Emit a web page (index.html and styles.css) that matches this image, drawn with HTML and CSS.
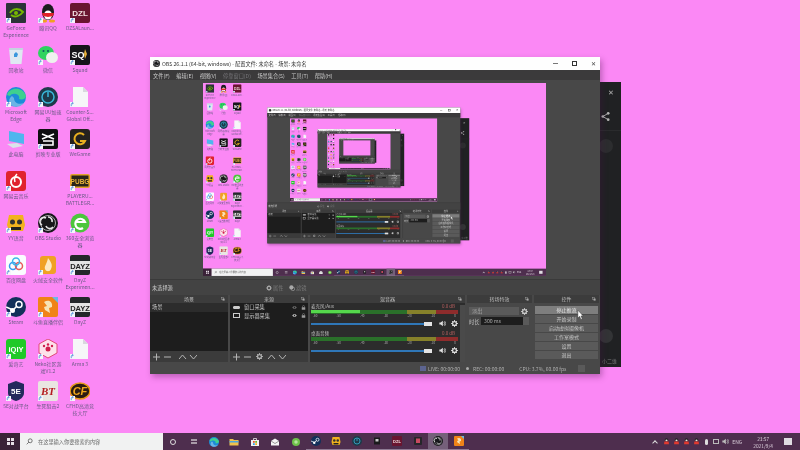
FILE: index.html
```html
<!DOCTYPE html>
<html lang="zh-CN">
<head>
<meta charset="utf-8">
<title>OBS</title>
<link rel="stylesheet" href="styles.css">
</head>
<body>
<svg class="defs" xmlns="http://www.w3.org/2000/svg">
  <symbol id="i-nvidia" viewBox="0 0 20 20"><rect width="20" height="20" rx="1" fill="#2b3338"/><path d="M4 10c3-5 9-5 13-1-3 4-8 6-12 3" fill="none" stroke="#76b900" stroke-width="2"/><circle cx="10" cy="10" r="2" fill="#76b900"/></symbol>
  <symbol id="i-qq" viewBox="0 0 20 20"><ellipse cx="10" cy="9" rx="6" ry="8" fill="#1b1b1f"/><ellipse cx="10" cy="12" rx="4" ry="4.500" fill="#fff"/><path d="M4 10h12l-1 3-5 1-5-1z" fill="#e0222a"/><ellipse cx="6" cy="18" rx="3" ry="1.500" fill="#f0a020"/><ellipse cx="14" cy="18" rx="3" ry="1.500" fill="#f0a020"/></symbol>
  <symbol id="i-dzl" viewBox="0 0 20 20"><rect width="20" height="20" rx="2" fill="#6a1530"/><text x="10" y="13" font-size="8" font-weight="700" text-anchor="middle" fill="#f2dfe0" font-family="Liberation Sans">DZL</text></symbol>
  <symbol id="i-bin" viewBox="0 0 20 20"><path d="M3 3h14l-1.500 16h-11z" fill="#dfe9f2"/><path d="M3 3h14v2H3z" fill="#c5d3e0"/><path d="M8 9l2-2 2 2-1 3H8z" fill="#3a97dd"/></symbol>
  <symbol id="i-wechat" viewBox="0 0 20 20"><ellipse cx="8" cy="8" rx="8" ry="7" fill="#2fd35f"/><ellipse cx="14" cy="12.500" rx="6" ry="5.500" fill="#eef2ee"/><circle cx="5.500" cy="6" r="1" fill="#156"/><circle cx="10" cy="6" r="1" fill="#156"/></symbol>
  <symbol id="i-squad" viewBox="0 0 20 20"><rect width="20" height="20" rx="2" fill="#16141a"/><text x="8" y="13" font-size="9" font-weight="700" text-anchor="middle" fill="#fff" font-family="Liberation Sans">SQ</text><path d="M15 4l2 5-2 5-1-5z" fill="#e8b13a"/></symbol>
  <symbol id="i-edge" viewBox="0 0 20 20"><circle cx="10" cy="10" r="10" fill="#1c8cd8"/><path d="M1 8C3 0 17-1 20 9c0 3-4 4-7 3 2-5-7-7-9-3z" fill="#3fd08f"/><path d="M8 11c0 5 5 7 10 5-3 4-9 5-13 2C2 15 3 11 6 9z" fill="#fff" opacity=".35"/></symbol>
  <symbol id="i-uu" viewBox="0 0 20 20"><circle cx="10" cy="10" r="10" fill="#1e3a4a"/><circle cx="10" cy="10" r="6" fill="none" stroke="#39b6d8" stroke-width="1.500"/><path d="M10 5v5" stroke="#39b6d8" stroke-width="1.500"/></symbol>
  <symbol id="i-file" viewBox="0 0 20 20"><path d="M3 0h10l5 5v15H3z" fill="#f6f6f8"/><path d="M13 0l5 5h-5z" fill="#d8d8de"/></symbol>
  <symbol id="i-pc" viewBox="0 0 20 20"><path d="M3 2l15 3v10L3 12z" fill="#4fb6ee"/><path d="M1 15l10-1 6 3-10 2z" fill="#dbe3ea"/></symbol>
  <symbol id="i-capcut" viewBox="0 0 20 20"><rect width="20" height="20" rx="2" fill="#0e0e10"/><path d="M4 5l12 5M16 5L4 10M5 12h10v4H5" fill="none" stroke="#fff" stroke-width="1.600"/></symbol>
  <symbol id="i-wegame" viewBox="0 0 20 20"><rect width="20" height="20" rx="3" fill="#24221f"/><path d="M14 6a5.500 5.500 0 1 0 1 6H10" fill="none" stroke="#e8b020" stroke-width="2"/></symbol>
  <symbol id="i-163" viewBox="0 0 20 20"><rect width="20" height="20" rx="3" fill="#e0222e"/><circle cx="10" cy="11" r="5" fill="none" stroke="#fff" stroke-width="2"/><path d="M11 3c-2 2-3 5-2 8" fill="none" stroke="#fff" stroke-width="1.500"/></symbol>
  <symbol id="i-pubg" viewBox="0 0 20 20"><rect y="3" width="20" height="14" rx="2" fill="#e2a12b"/><rect x="1.500" y="4.500" width="17" height="11" fill="#2a2418"/><text x="10" y="13" font-size="6.500" font-weight="700" text-anchor="middle" fill="#eab43c" font-family="Liberation Sans">PUBG</text></symbol>
  <symbol id="i-yy" viewBox="0 0 20 20"><path d="M3 2h14l2 10-2 6H3l-2-6z" fill="#f2b21e"/><circle cx="6.500" cy="9" r="2.500" fill="#333"/><circle cx="13.500" cy="9" r="2.500" fill="#333"/><path d="M5 14h10v3H5z" fill="#222"/></symbol>
  <symbol id="i-obs" viewBox="0 0 20 20"><circle cx="10" cy="10" r="10" fill="#17171a"/><circle cx="10" cy="10" r="7.500" fill="none" stroke="#cfcfcf" stroke-width=".8"/><path d="M10 4a4 4 0 0 1 4 5M15 14a4 4 0 0 1-7-1M4 12a4 4 0 0 1 4-7" fill="none" stroke="#e6e6e6" stroke-width="1.700"/></symbol>
  <symbol id="i-360" viewBox="0 0 20 20"><circle cx="10" cy="10" r="9.500" fill="#4cc63c"/><path d="M5 9h10a5 5 0 1 0-2 6" fill="none" stroke="#fff" stroke-width="2.200"/></symbol>
  <symbol id="i-baidu" viewBox="0 0 20 20"><rect width="20" height="20" rx="3" fill="#fafcff"/><circle cx="7" cy="11" r="3.500" fill="none" stroke="#3399f0" stroke-width="1.500"/><circle cx="13" cy="11" r="3.500" fill="none" stroke="#e85a5a" stroke-width="1.500"/><circle cx="10" cy="6.500" r="3.500" fill="none" stroke="#3cb6e8" stroke-width="1.500"/></symbol>
  <symbol id="i-huorong" viewBox="0 0 20 20"><rect x="2" y="1" width="16" height="18" rx="3" fill="#f0a124"/><path d="M10 3c3 4 5 7 3 11-1 3-5 3-6 0-1-3 2-5 3-11z" fill="#fde9c0"/></symbol>
  <symbol id="i-dayz" viewBox="0 0 20 20"><rect width="20" height="20" rx="2" fill="#24272a"/><rect y="6" width="20" height="9" fill="#e4e4e4"/><text x="10" y="13.500" font-size="7.500" font-weight="700" text-anchor="middle" fill="#222" font-family="Liberation Sans">DAYZ</text></symbol>
  <symbol id="i-steam" viewBox="0 0 20 20"><circle cx="10" cy="10" r="10" fill="#12305a"/><circle cx="13" cy="7.500" r="3" fill="none" stroke="#fff" stroke-width="1.500"/><circle cx="6.500" cy="13.500" r="2.500" fill="#fff"/><path d="M0 10l7 3 4-4" stroke="#fff" stroke-width="1.500" fill="none"/></symbol>
  <symbol id="i-douyu" viewBox="0 0 20 20"><rect width="20" height="20" rx="2" fill="#f08318"/><path d="M6 5c5-3 9 0 8 5l-3 1 1 5-5-3-1-3 3-1z" fill="#f7e3b5"/><path d="M14 0h6v6z" fill="#6ab8e8"/></symbol>
  <symbol id="i-iqiyi" viewBox="0 0 20 20"><rect width="20" height="20" rx="3" fill="#20c928"/><text x="10" y="13" font-size="7.500" font-weight="700" text-anchor="middle" fill="#fff" font-family="Liberation Sans">iQIY</text></symbol>
  <symbol id="i-neko" viewBox="0 0 20 20"><path d="M10 0l9 5v9l-9 5-9-5V5z" fill="#fde2ea" stroke="#e04a78"/><circle cx="10" cy="10" r="2.500" fill="#d01f4c"/><circle cx="6" cy="7" r="1.200" fill="#d01f4c"/><circle cx="10" cy="5.500" r="1.200" fill="#d01f4c"/><circle cx="14" cy="7" r="1.200" fill="#d01f4c"/></symbol>
  <symbol id="i-5e" viewBox="0 0 20 20"><path d="M10 0l8 3v9c0 4-4 7-8 8-4-1-8-4-8-8V3z" fill="#23295c"/><text x="10" y="13" font-size="8" font-weight="700" text-anchor="middle" fill="#fff" font-family="Liberation Sans">5E</text></symbol>
  <symbol id="i-bt" viewBox="0 0 20 20"><rect width="20" height="20" rx="2" fill="#e9e6e1"/><text x="10" y="14" font-size="11" font-style="italic" font-weight="700" text-anchor="middle" fill="#b41c20" font-family="Liberation Serif">BT</text></symbol>
  <symbol id="i-cf" viewBox="0 0 20 20"><ellipse cx="10" cy="10" rx="10" ry="8" fill="#2b1b12"/><ellipse cx="10" cy="10" rx="10" ry="8" fill="none" stroke="#e89a1a" stroke-width="1.500"/><text x="10" y="14" font-size="11" font-style="italic" font-weight="700" text-anchor="middle" fill="#f0a81a" font-family="Liberation Sans">CF</text></symbol>
  <symbol id="i-folder" viewBox="0 0 20 20"><path d="M1 4h7l2 2h9v11H1z" fill="#eec14c"/><path d="M1 8h18v3H1z" fill="#4aa6e0"/></symbol>
  <symbol id="i-store" viewBox="0 0 20 20"><path d="M2 6h16v12H2z" fill="#f2f2f2"/><path d="M7 6V3h6v3" fill="none" stroke="#f2f2f2" stroke-width="1.500"/><rect x="6" y="8" width="3.500" height="3.500" fill="#e8562a"/><rect x="10.500" y="8" width="3.500" height="3.500" fill="#6cba2c"/><rect x="6" y="12.500" width="3.500" height="3.500" fill="#2ca0e8"/><rect x="10.500" y="12.500" width="3.500" height="3.500" fill="#f2b21e"/></symbol>
  <symbol id="i-mail" viewBox="0 0 20 20"><path d="M2 8l8-5 8 5v9H2z" fill="#f4f4f4"/><path d="M2 8l8 5 8-5" fill="none" stroke="#555" stroke-width="1.200"/></symbol>
  <symbol id="i-green" viewBox="0 0 20 20"><circle cx="10" cy="10" r="8" fill="#6ec04a"/><circle cx="10" cy="10" r="3.500" fill="#b5e39c"/></symbol>
  <symbol id="i-film" viewBox="0 0 20 20"><rect x="4" y="3" width="12" height="14" fill="#1a1a1c"/><rect x="7" y="6" width="6" height="5" fill="#c8c8c8"/></symbol>
  <symbol id="i-dark" viewBox="0 0 20 20"><rect x="2" y="2" width="16" height="16" rx="2" fill="#26262a"/><rect x="6" y="5" width="8" height="9" fill="#c84a60"/></symbol>
  <symbol id="i-peng" viewBox="0 0 20 20"><circle cx="10" cy="6" r="5" fill="#1d1d22"/><ellipse cx="10" cy="7" rx="3" ry="2.500" fill="#f0e4e0"/><path d="M4 10h12l1 8H3z" fill="#e23a30"/></symbol>
  <symbol id="i-gear" viewBox="0 0 20 20"><circle cx="10" cy="10" r="5.500" fill="none" stroke="currentColor" stroke-width="3.500"/><path d="M10 0v4M10 16v4M0 10h4M16 10h4M3 3l3 3M14 14l3 3M17 3l-3 3M6 14l-3 3" stroke="currentColor" stroke-width="2.500"/></symbol>
  <symbol id="i-filter" viewBox="0 0 20 20"><circle cx="8" cy="8" r="7" fill="currentColor"/><circle cx="13" cy="13" r="6" fill="none" stroke="currentColor" stroke-width="2"/></symbol>
  <symbol id="i-speaker" viewBox="0 0 20 20"><path d="M1 7h4l6-5v16l-6-5H1z" fill="currentColor"/><path d="M14 6a6 6 0 0 1 0 8M16 3a10 10 0 0 1 0 14" fill="none" stroke="currentColor" stroke-width="2"/></symbol>
  <symbol id="i-eye" viewBox="0 0 20 20"><path d="M1 10c4-7 14-7 18 0-4 7-14 7-18 0z" fill="currentColor"/><circle cx="10" cy="10" r="3" fill="#222"/></symbol>
  <symbol id="i-lock" viewBox="0 0 20 20"><rect x="3" y="9" width="14" height="10" fill="currentColor"/><path d="M6 9V6a4 4 0 0 1 8 0v3" fill="none" stroke="currentColor" stroke-width="2"/></symbol>
  <symbol id="i-addrem" viewBox="0 0 18 8"><path d="M0 4h7M3.500 .5v7M11 4h7" fill="none" stroke="currentColor" stroke-width="1"/></symbol>
  <symbol id="i-updown" viewBox="0 0 18 8"><path d="M0 6l3.500-4L7 6M11 2l3.500 4L18 2" fill="none" stroke="currentColor" stroke-width="1"/></symbol>
  <symbol id="i-undock" viewBox="0 0 10 10"><rect x="1" y="1" width="5" height="5" fill="none" stroke="currentColor"/><rect x="4" y="4" width="5" height="5" fill="currentColor"/></symbol>
  <symbol id="i-arrow" viewBox="0 0 6 6"><rect width="6" height="6" fill="#f4f6fa"/><path d="M1.500 5V3c0-1 .5-1.500 1.500-1.500M2.500.5l1.500 1-1.500 1" fill="none" stroke="#1f6fd0" stroke-width=".8"/></symbol>
</svg>

<div class="screen">
  <div class="desktop">
    <div class="stage">
      <div class="icon-grid">
        <div class="dicon"><span class="dicon-pic"><svg><use href="#i-nvidia"/></svg><svg class="badge"><use href="#i-arrow"/></svg></span><span class="dicon-label">GeForce Experience</span></div>
        <div class="dicon"><span class="dicon-pic"><svg><use href="#i-qq"/></svg><svg class="badge"><use href="#i-arrow"/></svg></span><span class="dicon-label">腾讯QQ</span></div>
        <div class="dicon"><span class="dicon-pic"><svg><use href="#i-dzl"/></svg><svg class="badge"><use href="#i-arrow"/></svg></span><span class="dicon-label">DZSALaun...</span></div>
        <div class="dicon"><span class="dicon-pic"><svg><use href="#i-bin"/></svg></span><span class="dicon-label">回收站</span></div>
        <div class="dicon"><span class="dicon-pic"><svg><use href="#i-wechat"/></svg><svg class="badge"><use href="#i-arrow"/></svg></span><span class="dicon-label">微信</span></div>
        <div class="dicon"><span class="dicon-pic"><svg><use href="#i-squad"/></svg><svg class="badge"><use href="#i-arrow"/></svg></span><span class="dicon-label">Squad</span></div>
        <div class="dicon"><span class="dicon-pic"><svg><use href="#i-edge"/></svg><svg class="badge"><use href="#i-arrow"/></svg></span><span class="dicon-label">Microsoft Edge</span></div>
        <div class="dicon"><span class="dicon-pic"><svg><use href="#i-uu"/></svg><svg class="badge"><use href="#i-arrow"/></svg></span><span class="dicon-label">网易UU加速器</span></div>
        <div class="dicon"><span class="dicon-pic"><svg><use href="#i-file"/></svg><svg class="badge"><use href="#i-arrow"/></svg></span><span class="dicon-label">Counter-S... Global Off...</span></div>
        <div class="dicon"><span class="dicon-pic"><svg><use href="#i-pc"/></svg></span><span class="dicon-label">此电脑</span></div>
        <div class="dicon"><span class="dicon-pic"><svg><use href="#i-capcut"/></svg><svg class="badge"><use href="#i-arrow"/></svg></span><span class="dicon-label">剪映专业版</span></div>
        <div class="dicon"><span class="dicon-pic"><svg><use href="#i-wegame"/></svg><svg class="badge"><use href="#i-arrow"/></svg></span><span class="dicon-label">WeGame</span></div>
        <div class="dicon"><span class="dicon-pic"><svg><use href="#i-163"/></svg><svg class="badge"><use href="#i-arrow"/></svg></span><span class="dicon-label">网易云音乐</span></div>
        <div class="dicon"></div>
        <div class="dicon"><span class="dicon-pic"><svg><use href="#i-pubg"/></svg><svg class="badge"><use href="#i-arrow"/></svg></span><span class="dicon-label">PLAYERU... BATTLEGR...</span></div>
        <div class="dicon"><span class="dicon-pic"><svg><use href="#i-yy"/></svg><svg class="badge"><use href="#i-arrow"/></svg></span><span class="dicon-label">YY语音</span></div>
        <div class="dicon"><span class="dicon-pic"><svg><use href="#i-obs"/></svg><svg class="badge"><use href="#i-arrow"/></svg></span><span class="dicon-label">OBS Studio</span></div>
        <div class="dicon"><span class="dicon-pic"><svg><use href="#i-360"/></svg><svg class="badge"><use href="#i-arrow"/></svg></span><span class="dicon-label">360安全浏览器</span></div>
        <div class="dicon"><span class="dicon-pic"><svg><use href="#i-baidu"/></svg><svg class="badge"><use href="#i-arrow"/></svg></span><span class="dicon-label">百度网盘</span></div>
        <div class="dicon"><span class="dicon-pic"><svg><use href="#i-huorong"/></svg><svg class="badge"><use href="#i-arrow"/></svg></span><span class="dicon-label">火绒安全软件</span></div>
        <div class="dicon"><span class="dicon-pic"><svg><use href="#i-dayz"/></svg><svg class="badge"><use href="#i-arrow"/></svg></span><span class="dicon-label">DayZ Experimen...</span></div>
        <div class="dicon"><span class="dicon-pic"><svg><use href="#i-steam"/></svg><svg class="badge"><use href="#i-arrow"/></svg></span><span class="dicon-label">Steam</span></div>
        <div class="dicon"><span class="dicon-pic"><svg><use href="#i-douyu"/></svg><svg class="badge"><use href="#i-arrow"/></svg></span><span class="dicon-label">斗鱼直播伴侣</span></div>
        <div class="dicon"><span class="dicon-pic"><svg><use href="#i-dayz"/></svg><svg class="badge"><use href="#i-arrow"/></svg></span><span class="dicon-label">DayZ</span></div>
        <div class="dicon"><span class="dicon-pic"><svg><use href="#i-iqiyi"/></svg><svg class="badge"><use href="#i-arrow"/></svg></span><span class="dicon-label">爱奇艺</span></div>
        <div class="dicon"><span class="dicon-pic"><svg><use href="#i-neko"/></svg><svg class="badge"><use href="#i-arrow"/></svg></span><span class="dicon-label">Neko社区游戏V1.2</span></div>
        <div class="dicon"><span class="dicon-pic"><svg><use href="#i-file"/></svg><svg class="badge"><use href="#i-arrow"/></svg></span><span class="dicon-label">Arma 3</span></div>
        <div class="dicon"><span class="dicon-pic"><svg><use href="#i-5e"/></svg><svg class="badge"><use href="#i-arrow"/></svg></span><span class="dicon-label">5E对战平台</span></div>
        <div class="dicon"><span class="dicon-pic"><svg><use href="#i-bt"/></svg><svg class="badge"><use href="#i-arrow"/></svg></span><span class="dicon-label">生死狙击2</span></div>
        <div class="dicon"><span class="dicon-pic"><svg><use href="#i-cf"/></svg><svg class="badge"><use href="#i-arrow"/></svg></span><span class="dicon-label">CFHD高清竞技大厅</span></div>
      </div>

      <div class="win-cam">
        <div class="cam-close">✕</div>
        <div class="cam-share">
          <svg viewBox="0 0 10 10"><path d="M8 1.500L2 5l6 3.500" fill="none" stroke="currentColor"/><circle cx="8" cy="1.500" r="1.500" fill="currentColor"/><circle cx="2" cy="5" r="1.500" fill="currentColor"/><circle cx="8" cy="8.500" r="1.500" fill="currentColor"/></svg>
        </div>
        <div class="cam-body">
          <span class="cam-dot"></span>
          <span class="cam-dot cam-dot-low"></span>
          <span class="cam-note">小二维</span>
        </div>
      </div>

      <div class="win-obs">
        <div class="titlebar">
          <svg class="title-logo"><use href="#i-obs"/></svg>
          <span class="title-text">OBS 26.1.1 (64-bit, windows) - 配置文件: 未命名 - 场景: 未命名</span>
          <span class="title-btns">
            <span class="tb-min"></span><span class="tb-max"></span><span class="tb-close">✕</span>
          </span>
        </div>
        <div class="menubar">
          <span>文件(F)</span><span>编辑(E)</span><span>视图(V)</span><span class="menu-off">停靠窗口(D)</span><span>场景集合(S)</span><span>工具(T)</span><span>帮助(H)</span>
        </div>
        <div class="preview-area">
          <div class="preview-slot"></div>
        </div>
        <div class="source-bar">
          <span class="source-name">未选择源</span>
          <span class="source-tool"><svg><use href="#i-gear"/></svg>属性</span>
          <span class="source-tool"><svg><use href="#i-filter"/></svg>滤镜</span>
        </div>
        <div class="docks">
          <section class="dock dock-list">
            <header class="dock-head">场景<svg><use href="#i-undock"/></svg></header>
            <div class="list-body"><div class="list-row list-row-sel">场景</div></div>
            <div class="dock-tools"><svg class="tools-svg"><use href="#i-addrem"/></svg><svg class="tools-svg tools-svg-end"><use href="#i-updown"/></svg></div>
          </section>
          <section class="dock dock-list">
            <header class="dock-head">来源<svg><use href="#i-undock"/></svg></header>
            <div class="list-body">
              <div class="list-row"><span class="src-ic src-ic-cam"></span>窗口采集<svg class="row-ic row-ic-first row-ic-dim"><use href="#i-eye"/></svg><svg class="row-ic"><use href="#i-lock"/></svg></div>
              <div class="list-row"><span class="src-ic"></span>显示器采集<svg class="row-ic row-ic-first"><use href="#i-eye"/></svg><svg class="row-ic"><use href="#i-lock"/></svg></div>
            </div>
            <div class="dock-tools"><svg class="tools-svg"><use href="#i-addrem"/></svg><svg class="tools-gear"><use href="#i-gear"/></svg><svg class="tools-svg"><use href="#i-updown"/></svg></div>
          </section>
          <section class="dock dock-mixer">
            <header class="dock-head">混音器<svg><use href="#i-undock"/></svg></header>
            <div class="mixer-body">
              <div class="channels">
                <div class="channel">
                  <div class="ch-top"><span>麦克风/Aux</span><span class="ch-db">0.0 dB</span></div>
                  <div class="meter"><i class="m-live"></i></div>
                  <div class="ticks"><span>-60</span><span>-50</span><span>-40</span><span>-30</span><span>-20</span><span>-10</span><span>0</span></div>
                  <div class="ch-ctl"><span class="fader"><i></i></span><svg class="ch-ic"><use href="#i-speaker"/></svg><svg class="ch-ic"><use href="#i-gear"/></svg></div>
                </div>
                <div class="channel">
                  <div class="ch-top"><span>桌面音频</span><span class="ch-db">0.0 dB</span></div>
                  <div class="meter"></div>
                  <div class="ticks"><span>-60</span><span>-50</span><span>-40</span><span>-30</span><span>-20</span><span>-10</span><span>0</span></div>
                  <div class="ch-ctl"><span class="fader"><i></i></span><svg class="ch-ic"><use href="#i-speaker"/></svg><svg class="ch-ic"><use href="#i-gear"/></svg></div>
                </div>
              </div>
              <div class="mixer-scroll"></div>
            </div>
          </section>
          <section class="dock dock-side">
            <header class="dock-head">转场特效<svg><use href="#i-undock"/></svg></header>
            <div class="trans-body">
              <div class="trans-row"><span class="trans-select">淡出</span><svg class="trans-gear"><use href="#i-gear"/></svg></div>
              <div class="trans-row"><span class="trans-lbl">时长</span><span class="trans-input">300 ms</span><span class="trans-spin"></span></div>
            </div>
          </section>
          <section class="dock dock-side">
            <header class="dock-head">控件<svg><use href="#i-undock"/></svg></header>
            <div class="ctrl-body">
              <span class="ctrl-btn ctrl-btn-hover">停止推流</span>
              <span class="ctrl-btn">开始录制</span>
              <span class="ctrl-btn">启动虚拟摄像机</span>
              <span class="ctrl-btn">工作室模式</span>
              <span class="ctrl-btn">设置</span>
              <span class="ctrl-btn">退出</span>
            </div>
          </section>
        </div>
        <div class="statusbar">
          <span class="st-box"></span><span class="st-txt">LIVE: 00:00:00</span>
          <span class="st-dot"></span><span class="st-txt">REC: 00:00:00</span>
          <span class="st-txt st-cpu">CPU: 3.7%, 60.00 fps</span>
          <span class="st-end"></span>
        </div>
      </div>
      <svg class="cursor" viewBox="0 0 8 11"><path d="M1 0v9l2-2 1.500 3.500 1.500-.7L4.500 6.500H7z" fill="#fff" stroke="#333" stroke-width=".5"/></svg>
    </div>

    <div class="taskbar">
      <div class="tb-start"><span></span><span></span><span></span><span></span></div>
      <div class="tb-search">
        <svg viewBox="0 0 10 10"><circle cx="6" cy="4" r="2.800" fill="none" stroke="#444"/><path d="M4 6L1 9" stroke="#444"/></svg>
        <span>在这里输入你要搜索的内容</span>
      </div>
      <div class="tb-apps">
        <span class="tb-app"><i class="tb-ring"></i></span>
        <span class="tb-app"><i class="tb-view"></i></span>
        <span class="tb-app"><svg><use href="#i-edge"/></svg></span>
        <span class="tb-app"><svg><use href="#i-folder"/></svg></span>
        <span class="tb-app"><svg><use href="#i-store"/></svg></span>
        <span class="tb-app"><svg><use href="#i-mail"/></svg></span>
        <span class="tb-app"><svg><use href="#i-green"/></svg></span>
        <span class="tb-app tb-run"><svg><use href="#i-steam"/></svg></span>
        <span class="tb-app tb-run"><svg><use href="#i-yy"/></svg></span>
        <span class="tb-app tb-run"><svg><use href="#i-uu"/></svg></span>
        <span class="tb-app tb-run"><svg><use href="#i-film"/></svg></span>
        <span class="tb-app tb-run"><svg><use href="#i-dzl"/></svg></span>
        <span class="tb-app tb-run"><svg><use href="#i-dark"/></svg></span>
        <span class="tb-app tb-run tb-active"><svg><use href="#i-obs"/></svg></span>
        <span class="tb-app tb-run"><svg><use href="#i-douyu"/></svg></span>
      </div>
      <div class="tb-tray">
        <span class="tray-chev"></span>
        <svg class="tray-ic"><use href="#i-peng"/></svg>
        <svg class="tray-ic"><use href="#i-peng"/></svg>
        <svg class="tray-ic"><use href="#i-peng"/></svg>
        <svg class="tray-ic"><use href="#i-peng"/></svg>
        <span class="tray-mic"></span>
        <span class="tray-net"></span>
        <svg class="tray-ic tray-vol"><use href="#i-speaker"/></svg>
        <span class="tray-lang">ENG</span>
        <span class="tray-clock"><span>23:57</span><span>2021/9/4</span></span>
        <span class="tray-note"></span>
      </div>
    </div>
  </div>
</div>
<script src="script.js"></script>
</body>
</html>
```

FILE: styles.css
```css
* { box-sizing: border-box; }
html, body { margin: 0; width: 800px; height: 450px; overflow: hidden; background: #fb88f5; }
body { font-family: "Noto Sans CJK SC", "Noto Sans", sans-serif; font-size: 5.2px; }
.defs { width: 0; height: 0; display: block; }
.screen { width: 800px; height: 450px; filter: blur(0.6px); }

.desktop { width: 800px; height: 450px; display: flex; flex-direction: column; background: #fb88f5; transform-origin: 0 0; }
.stage { flex: 1; position: relative; overflow: hidden; }

.icon-grid { display: grid; grid-template-columns: repeat(3, 32px); grid-auto-rows: 42px; padding-top: 3px; }
.dicon { display: flex; flex-direction: column; align-items: center; min-width: 0; }
.dicon-pic { position: relative; display: block; width: 20px; height: 20px; }
.dicon-pic > svg { width: 20px; height: 20px; display: block; }
.dicon-pic > .badge { position: absolute; left: 0; bottom: 0; width: 5px; height: 5px; }
.dicon-label { margin-top: 1px; width: 32px; text-align: center; font-size: 5px; line-height: 7px; color: #6b5a86; }

.win-cam { position: absolute; left: 560px; top: 82px; width: 61px; height: 285px; background: #202123; color: #b4b4b4; display: flex; flex-direction: column; align-items: flex-end; }
.cam-close { width: 21px; height: 21px; font-size: 7px; line-height: 21px; text-align: center; }
.cam-share { height: 28px; border-bottom: 1px solid #2a2b2d; width: 100%; display: flex; justify-content: flex-end; align-items: center; padding-right: 11px; }
.cam-share svg { width: 9px; height: 9px; }
.cam-body { flex: 1; width: 100%; position: relative; }
.cam-dot { position: absolute; left: 39px; top: 8px; width: 14px; height: 14px; border-radius: 50%; background: #2c2d2f; }
.cam-dot-low { top: 198px; background: #333436; }
.cam-note { position: absolute; right: 4px; bottom: 3px; font-size: 5px; color: #77777a; }

.win-obs { position: absolute; left: 150px; top: 57px; width: 450px; height: 317px; background: #484848; display: flex; flex-direction: column; box-shadow: 2px 3px 6px rgba(70, 20, 70, .35); color: #c9c9c9; }
.titlebar { height: 13px; background: #fefefe; color: #333; display: flex; align-items: center; padding-left: 3px; flex: none; }
.title-logo { width: 7px; height: 7px; margin-right: 2px; }
.title-text { font-size: 5.200px; white-space: nowrap; }
.title-btns { margin-left: auto; display: flex; align-items: center; gap: 14px; padding-right: 4px; }
.tb-min { width: 5px; height: 1px; background: #777; }
.tb-max { width: 5px; height: 5px; border: 1px solid #333; }
.tb-close { font-size: 6px; line-height: 6px; color: #444; }
.menubar { height: 10px; background: #3b3a3b; display: flex; align-items: center; gap: 6.500px; padding-left: 3px; flex: none; white-space: nowrap; }
.menu-off { color: #77767a; }
.preview-area { height: 196px; padding: 3px 0 0 53px; flex: none; }
.preview-slot { width: 343px; height: 193px; overflow: hidden; background: #fb88f5; }
.source-bar { margin-top: 3px; height: 16px; display: flex; align-items: center; padding-left: 2px; background: #434343; border-top: 1px solid #3a3a3a; flex: none; }
.source-name { width: 114px; color: #d0d0d0; }
.source-tool { display: flex; align-items: center; gap: 1px; width: 23px; color: #777; }
.source-tool svg { width: 6px; height: 6px; color: #a9a9a9; }

.docks { height: 67px; display: flex; gap: 2px; flex: none; }
.dock { display: flex; flex-direction: column; flex: none; }
.dock-list { width: 78px; }
.dock-mixer { width: 155px; }
.dock-side { width: 65px; }
.dock-head { height: 8px; flex: none; background: #3c3c3c; position: relative; text-align: center; line-height: 8px; font-size: 5px; font-weight: 400; color: #bdbdbd; }
.dock-head svg { position: absolute; right: 3px; top: 2px; width: 4px; height: 4px; color: #aaa; }
.list-body { flex: 1; background: #1d1d1d; }
.list-row { height: 8.500px; line-height: 8px; display: flex; align-items: center; padding: 0 2px; color: #c4c4c4; }
.list-row-sel { background: #2c2c2c; }
.src-ic { width: 7px; height: 5px; border: 1px solid #ccc; margin: 0 4px 0 1px; }
.src-ic-cam { background: #ccc; border-radius: 1px; height: 3px; }
.row-ic { width: 5px; height: 5px; color: #9b9b9b; margin-left: 4px; }
.row-ic-first { margin-left: auto; color: #c8c8c8; }
.row-ic-dim { color: #6f6f6f; }
.dock-tools { height: 11px; background: #3b3b3b; flex: none; display: flex; align-items: center; padding-left: 3px; color: #b4b4b4; gap: 5px; }
.tools-svg { width: 18px; height: 8px; }
.tools-svg-end { margin-left: 3px; }
.tools-gear { width: 7px; height: 7px; }

.mixer-body { flex: 1; display: flex; background: #2c2c2c; }
.channels { flex: 1; padding: 0 2px 0 1px; display: flex; flex-direction: column; gap: 1px; min-width: 0; }
.channel { height: 26px; display: flex; flex-direction: column; }
.ch-top { display: flex; justify-content: space-between; height: 7px; line-height: 7px; font-size: 4.500px; color: #bdbdbd; padding-right: 3px; flex: none; }
.ch-db { color: #b86060; }
.meter { height: 4px; flex: none; position: relative; background: linear-gradient(90deg, #2a702a 0 65%, #86812a 65% 85%, #8e2c2c 85% 100%); }
.m-live { position: absolute; left: 0; top: 0; bottom: 1px; width: 33%; background: #55d84c; }
.ticks { display: flex; justify-content: space-between; font-size: 3px; line-height: 4px; height: 4px; color: #aaa; padding: 0 2px; flex: none; }
.ch-ctl { display: flex; align-items: center; gap: 2px; margin-top: 1px; height: 9px; flex: none; }
.fader { flex: 1; height: 2px; background: #2f77b8; position: relative; margin-right: 2px; }
.fader i { position: absolute; right: 0; top: -1px; width: 8px; height: 4px; background: #e4e4e4; }
.ch-ic { width: 7px; height: 7px; color: #e0e0e0; margin-left: 3px; }
.mixer-scroll { width: 5px; background: #4a4a4a; margin: 2px 0 0; flex: none; }

.trans-body { flex: 1; background: #484848; padding: 4px 2px; display: flex; flex-direction: column; gap: 2px; }
.trans-row { display: flex; align-items: center; height: 8px; }
.trans-select { width: 50px; height: 8px; line-height: 8px; background: #5a5a5a; padding-left: 3px; color: #aaa; }
.trans-gear { width: 7px; height: 7px; margin-left: 2px; color: #ccc; }
.trans-lbl { width: 12px; }
.trans-input { width: 42px; height: 8px; line-height: 8px; background: #1d1d1d; padding-left: 3px; color: #aaa; }
.trans-spin { width: 6px; height: 8px; background: #5a5a5a; }

.ctrl-body { flex: 1; background: #484848; padding: 2.500px 1px; display: flex; flex-direction: column; gap: 1.200px; }
.ctrl-btn { height: 8px; line-height: 8px; background: #5a5a5a; text-align: center; font-size: 5px; color: #c4c4c4; flex: none; }
.ctrl-btn-hover { background: #7e7e7e; color: #e8e8e8; }

.statusbar { flex: 1; display: flex; align-items: center; padding-left: 270px; font-size: 5px; color: #aeaeae; background: #484848; white-space: nowrap; }
.st-box { width: 6px; height: 5px; background: #5c6490; margin-right: 2px; }
.st-txt { margin-right: 6px; }
.st-dot { width: 3px; height: 3px; border-radius: 50%; background: #aaa; margin-right: 4px; }
.st-cpu { margin-left: 9px; }
.st-end { width: 7px; height: 7px; background: #5a5a5a; margin-left: 6px; }

.cursor { position: absolute; left: 577px; top: 310px; width: 7px; height: 10px; }

.taskbar { height: 17px; flex: none; display: flex; background: #4e2e4e; color: #dcd0dc; }
.tb-start { width: 20px; background: #3a2238; display: grid; grid-template-columns: 3px 3px; grid-auto-rows: 3px; gap: 1px; align-content: center; justify-content: center; }
.tb-start span { background: #e8e0e8; }
.tb-search { width: 143px; background: #f1f2f2; color: #6a6a6a; display: flex; align-items: center; gap: 5px; padding-left: 6px; font-size: 5.200px; }
.tb-search svg { width: 7px; height: 7px; }
.tb-apps { display: flex; }
.tb-app { width: 20.400px; height: 17px; display: flex; align-items: center; justify-content: center; position: relative; }
.tb-app svg { width: 10px; height: 10px; }
.tb-run { border-bottom: 1px solid #8f7b94; }
.tb-active { background: #75607a; }
.tb-ring { width: 6px; height: 6px; border-radius: 50%; border: 1px solid #ddd; }
.tb-view { width: 6px; height: 5px; border-top: 2px solid #a99aa8; border-bottom: 2px solid #a99aa8; }
.tb-tray { margin-left: auto; display: flex; align-items: center; padding-right: 8px; }
.tray-chev { width: 4px; height: 4px; border-left: 1px solid #ddd; border-top: 1px solid #ddd; transform: rotate(45deg); margin: 2px 3px 0 0; }
.tray-ic { width: 7px; height: 7px; margin-left: 3px; }
.tray-mic { width: 3px; height: 6px; border-radius: 2px; background: #ddd; margin-left: 5px; }
.tray-net { width: 6px; height: 5px; border: 1px solid #bbb; margin-left: 5px; }
.tray-vol { color: #bbb; }
.tray-lang { font-size: 5px; margin-left: 3px; }
.tray-clock { display: flex; flex-direction: column; align-items: center; font-size: 4.800px; line-height: 7px; margin-left: 11px; }
.tray-note { width: 8px; height: 7px; background: #e0dce2; margin-left: 11px; }
```

FILE: script.js
```js
// The OBS preview shows the desktop itself, so the picture repeats inside its own preview.
const SCALE = 343 / 800;
const DEPTH = 3;
const template = document.querySelector('.desktop').cloneNode(true);

function fill(desktop, depth) {
  if (depth === 0) return;
  const slot = desktop.querySelector('.preview-slot');
  const inner = template.cloneNode(true);
  inner.style.transform = `scale(${SCALE})`;
  slot.appendChild(inner);
  fill(inner, depth - 1);
}

fill(document.querySelector('.desktop'), DEPTH);
```
